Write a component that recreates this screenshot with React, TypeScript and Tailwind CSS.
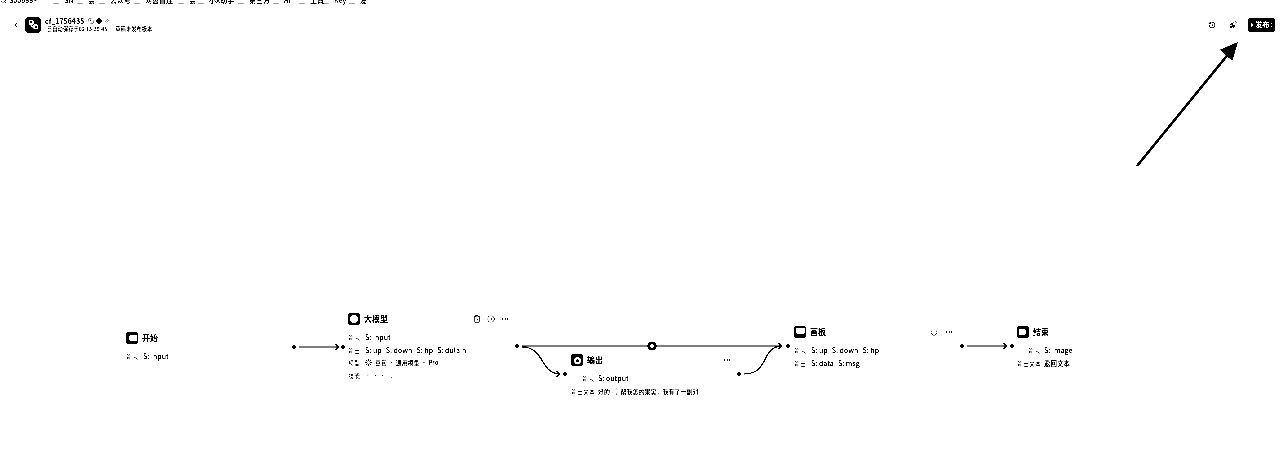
import type { ReactNode } from "react";
import { ChevronLeft, CircleDot, ClipboardCheck, Copy, Ellipsis, Folder, History, Lightbulb, Loader, PenLine, Play, Power, Rocket, Search, Circle, Workflow } from "lucide-react";

const font = { fontFamily: '"Noto Sans CJK SC", sans-serif' };

const bookmarks = [
  { label: "SN", w: "w-[24px]" },
  { label: "会", w: "w-[22px]" },
  { label: "公众号", w: "w-[35px]" },
  { label: "网盘直连", w: "w-[44px]" },
  { label: "会", w: "w-[20px]" },
  { label: "小X助手", w: "w-[40px]" },
  { label: "第三方", w: "w-[35px]" },
  { label: "AI", w: "w-[26px]" },
  { label: "工具", w: "w-[24px]" },
  { label: "Key", w: "w-[26px]" },
  { label: "友", w: "w-[20px]" },
];

type Row = { label: string; values: ReactNode[] };

function NodeIcon({ kind }: { kind: string }) {
  return (
    <div className="w-3 h-3 shrink-0 rounded-[3px] bg-black flex items-center justify-center">
      {kind === "start" && <div className="w-2 h-[6px] ml-[2px] rounded-l-full bg-white" />}
      {kind === "llm" && <div className="w-2 h-2 rounded-full bg-white" />}
      {kind === "out" && <div className="w-[7px] h-[7px] rounded-full border-2 border-white" />}
      {kind === "canvas" && <div className="w-[9px] h-[6px] -mt-[3px] rounded-b-[3px] bg-white" />}
      {kind === "end" && <div className="w-[7px] h-[6px] -ml-[2px] bg-white rounded-r-[2px]" />}
    </div>
  );
}

function Rows({ rows, labelCls }: { rows: Row[]; labelCls: string }) {
  return (
    <div className="flex flex-col gap-[3.5px] mt-[8px]">
      {rows.map((row) => (
        <div key={row.label} className="flex gap-[4px] h-[9px] items-center text-[7px] leading-[9px] whitespace-nowrap">
          <span className={"shrink-0 text-[6px] " + labelCls}>{row.label}</span>
          {row.values.map((v, i) => (
            <span key={i} className="font-medium flex items-center">{v}</span>
          ))}
        </div>
      ))}
    </div>
  );
}

function FlowNode(props: {
  cls: string;
  kind: string;
  title: string;
  rows: Row[];
  labelCls?: string;
  actions?: ReactNode;
}) {
  return (
    <div className={"absolute " + props.cls}>
      <div className="flex items-center gap-[4px] h-3">
        <NodeIcon kind={props.kind} />
        <span className="text-[8px] font-bold">{props.title}</span>
        {props.actions}
      </div>
      <Rows rows={props.rows} labelCls={props.labelCls ?? "w-[13px]"} />
    </div>
  );
}

function Edges() {
  return (
    <svg className="absolute inset-0" width="1280" height="476" fill="none" stroke="black" strokeWidth="1.2">
      <circle cx="294" cy="347" r="1.8" fill="black" stroke="none" />
      <path d="M299 347H339M335 344l4 3l-4 3" />
      <circle cx="343" cy="347" r="1.8" fill="black" stroke="none" />
      <circle cx="517" cy="346" r="1.8" fill="black" stroke="none" />
      <path d="M522 346H782M778 343l4 3l-4 3" />
      <path d="M522 347C545 347 540 374 560 374M556 371l4 3l-4 3" />
      <circle cx="565" cy="374" r="1.8" fill="black" stroke="none" />
      <circle cx="739" cy="374" r="1.8" fill="black" stroke="none" />
      <path d="M744 374C770 374 760 347 782 346" />
      <circle cx="788" cy="346" r="1.8" fill="black" stroke="none" />
      <circle cx="652" cy="346" r="4.6" fill="black" stroke="none" />
      <path d="M650 346H654M652 344V348" stroke="white" strokeWidth="1.4" />
      <circle cx="962" cy="346" r="1.8" fill="black" stroke="none" />
      <path d="M967 346H1007M1003 343l4 3l-4 3" />
      <circle cx="1012" cy="346" r="1.8" fill="black" stroke="none" />
      {/* annotation arrow */}
      <path d="M1137 166L1230 52" strokeWidth="2.6" />
      <path d="M1237 43L1232 60L1221 50Z" fill="black" stroke="black" />
    </svg>
  );
}

export default function App() {
  return (
    <div className="relative w-[1280px] h-[476px] bg-white text-black overflow-hidden contrast-[6]" style={font}>
      {/* bookmarks bar, scrolled off the top of the shot */}
      <div className="flex items-center h-[10px] -mt-[5px] text-[7px] font-medium whitespace-nowrap">
        <Search className="w-[7px] h-[7px] shrink-0" strokeWidth={2} />
        <span className="w-[44px] pl-[2px] shrink-0">S00688~</span>
        {bookmarks.map((b, i) => (
          <div key={i} className={"flex items-center gap-[3px] shrink-0 " + b.w}>
            <Folder className="w-[10px] h-[10px] shrink-0" strokeWidth={1.4} />
            <span>{b.label}</span>
          </div>
        ))}
      </div>

      {/* header */}
      <div className="flex items-center justify-between pl-[12px] pr-[5px] mt-[11px]">
        <div className="flex items-center">
          <ChevronLeft className="w-2 h-2" strokeWidth={3} />
          <div className="w-4 h-4 ml-[5px] rounded-[4px] bg-black flex items-center justify-center">
            <Workflow className="w-[11px] h-[11px] text-white" strokeWidth={3} />
          </div>
          <div className="ml-1">
            <div className="flex items-center gap-[2px] h-[10px] text-[7px] font-bold">
              cf_1756435
              <Copy className="w-[6px] h-[6px] ml-[2px]" strokeWidth={2} />
              <Circle className="w-[6px] h-[6px]" fill="black" />
              <PenLine className="w-[6px] h-[6px]" strokeWidth={2} />
            </div>
            <div className="flex gap-[8px] pl-[2px] text-[5.3px] leading-[7px] font-medium whitespace-nowrap">
              <span>已自动保存于02 13:38:45</span>
              <span>草稿未发布版本</span>
            </div>
          </div>
        </div>
        <div className="flex items-center">
          <History className="w-2 h-2" strokeWidth={2.4} />
          <Rocket className="w-2 h-2 ml-[13px]" strokeWidth={2.4} />
          <div className="ml-[11px] w-[27px] h-[14px] rounded-[3px] bg-black text-white text-[7px] font-bold flex items-center justify-center gap-[1px]">
            <Play className="w-[4px] h-[4px]" fill="white" />
            发布
            <span>:</span>
          </div>
        </div>
      </div>

      {/* canvas */}
      <Edges />
      <FlowNode
        cls="left-[126px] top-[332px]"
        kind="start"
        title="开始"
        rows={[{ label: "输入", values: ["S: input"] }]}
      />
      <FlowNode
        cls="left-[348px] top-[313px]"
        kind="llm"
        title="大模型"
        actions={
          <div className="absolute left-[125px] top-[2px] flex items-center gap-[6px]">
            <ClipboardCheck className="w-2 h-2" strokeWidth={2} />
            <CircleDot className="w-2 h-2" strokeWidth={2} />
            <Ellipsis className="w-2 h-2" strokeWidth={2} />
          </div>
        }
        rows={[
          { label: "输入", values: ["S: input"] },
          { label: "输出", values: ["S: up", "S: down", "S: hp", "S: dulain"] },
          {
            label: "模型",
            values: [
              <>
                <Loader className="w-[7px] h-[7px] mr-[3px]" strokeWidth={3} />
                <span className="text-[6px]">豆包 · 通用模型 · Pro</span>
              </>,
            ],
          },
          { label: "技能", values: [<span className="text-[6px] font-light">无 · · 人工</span>] },
        ]}
      />
      <FlowNode
        cls="left-[571px] top-[354px]"
        kind="out"
        title="输出"
        labelCls="w-[23px] text-right"
        actions={<Ellipsis className="absolute left-[152px] top-[2px] w-2 h-2" strokeWidth={2} />}
        rows={[
          { label: "输入", values: ["S: output"] },
          {
            label: "输出文本",
            values: [
              <span className="flex items-center text-[6px]">
                好的~
                <Lightbulb className="w-[7px] h-[7px]" strokeWidth={2} />
                帮我怎的果实，我有了一副对…
              </span>,
            ],
          },
        ]}
      />
      <FlowNode
        cls="left-[794px] top-[326px]"
        kind="canvas"
        title="画板"
        actions={
          <div className="absolute left-[136px] top-[2px] flex items-center gap-[7px]">
            <Power className="w-2 h-2" strokeWidth={2} />
            <Ellipsis className="w-2 h-2" strokeWidth={2} />
          </div>
        }
        rows={[
          { label: "输入", values: ["S: up", "S: down", "S: hp"] },
          { label: "输出", values: ["S: data", "S: msg"] },
        ]}
      />
      <FlowNode
        cls="left-[1017px] top-[326px]"
        kind="end"
        title="结束"
        labelCls="w-[23px] text-right"
        rows={[
          { label: "输入", values: ["S: image"] },
          { label: "输出文本", values: [<span className="text-[6.5px]">返回文本</span>] },
        ]}
      />
    </div>
  );
}
